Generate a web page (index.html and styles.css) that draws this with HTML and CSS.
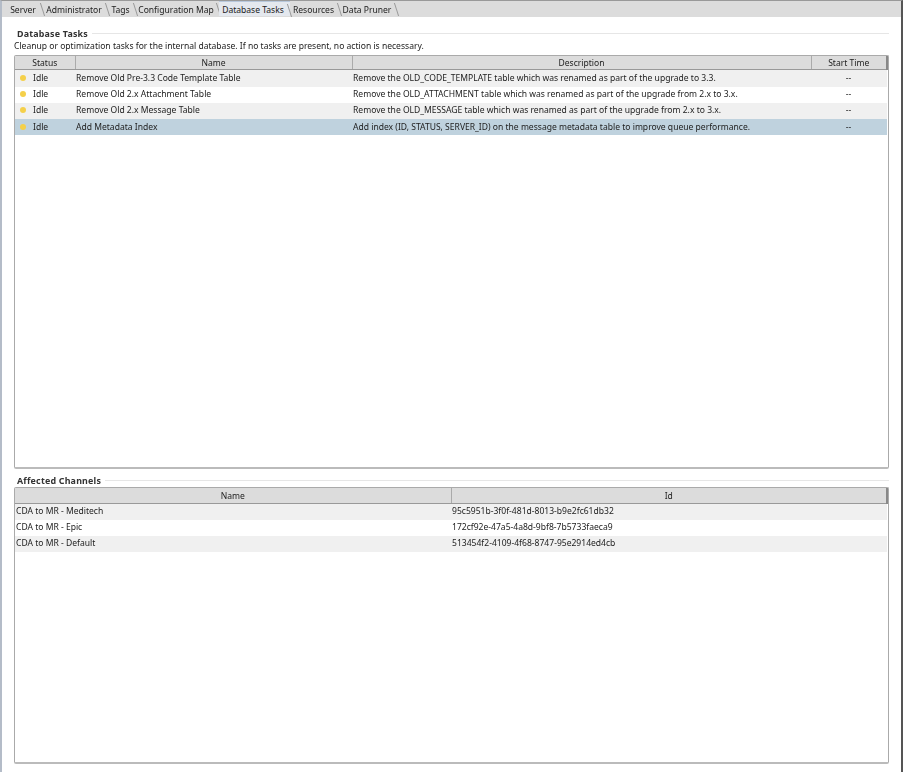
FILE: index.html
```html
<!DOCTYPE html>
<html lang="en">
<head>
    <meta charset="UTF-8">
    <title>Database Tasks</title>
    <link rel="stylesheet" href="styles.css">
</head>
<body>
    <div class="window">
        <div class="tabbar">
            <div class="tab tab-server">Server</div>
            <div class="tab tab-admin">Administrator</div>
            <div class="tab tab-tags">Tags</div>
            <div class="tab tab-config">Configuration Map</div>
            <div class="tab tab-active">Database Tasks</div>
            <div class="tab tab-resources">Resources</div>
            <div class="tab tab-pruner">Data Pruner</div>
        </div>
        <div class="content">
            <div class="section-title"><span>Database Tasks</span></div>
            <p class="hint">Cleanup or optimization tasks for the internal database. If no tasks are present, no action is necessary.</p>
            <div class="table-box tasks-box">
                <table class="tasks">
                    <colgroup>
                        <col class="col-status">
                        <col class="col-name">
                        <col class="col-desc">
                        <col>
                    </colgroup>
                    <thead>
                        <tr><th>Status</th><th>Name</th><th>Description</th><th>Start Time</th></tr>
                    </thead>
                    <tbody>
                        <tr class="odd">
                            <td><span class="dot"></span>Idle</td>
                            <td>Remove Old Pre-3.3 Code Template Table</td>
                            <td>Remove the OLD_CODE_TEMPLATE table which was renamed as part of the upgrade to 3.3.</td>
                            <td class="center">--</td>
                        </tr>
                        <tr>
                            <td><span class="dot"></span>Idle</td>
                            <td>Remove Old 2.x Attachment Table</td>
                            <td>Remove the OLD_ATTACHMENT table which was renamed as part of the upgrade from 2.x to 3.x.</td>
                            <td class="center">--</td>
                        </tr>
                        <tr class="odd">
                            <td><span class="dot"></span>Idle</td>
                            <td>Remove Old 2.x Message Table</td>
                            <td>Remove the OLD_MESSAGE table which was renamed as part of the upgrade from 2.x to 3.x.</td>
                            <td class="center">--</td>
                        </tr>
                        <tr class="selected">
                            <td><span class="dot"></span>Idle</td>
                            <td>Add Metadata Index</td>
                            <td>Add index (ID, STATUS, SERVER_ID) on the message metadata table to improve queue performance.</td>
                            <td class="center">--</td>
                        </tr>
                    </tbody>
                </table>
            </div>
            <div class="section-title channels-title"><span>Affected Channels</span></div>
            <div class="table-box channels-box">
                <table class="channels">
                    <colgroup>
                        <col class="col-channel">
                        <col>
                    </colgroup>
                    <thead>
                        <tr><th>Name</th><th>Id</th></tr>
                    </thead>
                    <tbody>
                        <tr class="odd"><td>CDA to MR - Meditech</td><td>95c5951b-3f0f-481d-8013-b9e2fc61db32</td></tr>
                        <tr><td>CDA to MR - Epic</td><td>172cf92e-47a5-4a8d-9bf8-7b5733faeca9</td></tr>
                        <tr class="odd"><td>CDA to MR - Default</td><td>513454f2-4109-4f68-8747-95e2914ed4cb</td></tr>
                    </tbody>
                </table>
            </div>
        </div>
    </div>
</body>
</html>
```

FILE: styles.css
```css
html, body {
    margin: 0;
    padding: 0;
    height: 100%;
    background-color: #fff;
}
body {
    font-family: "Noto Sans", sans-serif;
    font-size: 8.55px;
    color: #222;
    overflow: hidden;
}
.window {
    width: 903px;
    height: 772px;
    box-sizing: border-box;
    border-left: 2px solid #b4bcc8;
    border-right: 2px solid #555;
    border-top: 1px solid #999;
    display: flex;
    flex-direction: column;
    filter: blur(0.45px);
}
.tabbar {
    height: 16px;
    flex: none;
    display: flex;
    background-color: #dcdcdc;
    padding-left: 4px;
}
.tab {
    position: relative;
    height: 15px;
    line-height: 19px;
    box-sizing: border-box;
    padding-right: 3px;
    text-align: center;
    white-space: nowrap;
}
/* slanted divider between tabs */
.tab::after {
    content: "";
    position: absolute;
    top: 2px;
    right: 0;
    width: 1px;
    height: 13px;
    background-color: #999;
    transform: skewX(18deg);
}
.tab-server { width: 37px; }
.tab-admin { width: 65px; }
.tab-tags { width: 28px; }
.tab-config { width: 83px; }
.tab-active {
    width: 71px;
    background-color: #e4e8ee;
    border-top: 1px solid #b8c8dc;
    line-height: 16px;
}
.tab-resources { width: 50px; }
.tab-pruner { width: 57px; }
.content {
    flex: 1;
    display: flex;
    flex-direction: column;
    padding: 10px 12px 6px 12px;
    min-height: 0;
}
.section-title {
    display: flex;
    align-items: center;
    gap: 4px;
    height: 12px;
    padding-left: 3px;
    font-size: 8.9px;
    font-weight: bold;
    letter-spacing: 0.2px;
    color: #333;
}
.section-title::after {
    content: "";
    flex: 1;
    height: 1px;
    background-color: #e6e6e6;
}
.hint {
    margin: 1px 0 3px 0;
    height: 12px;
    line-height: 12px;
}
.table-box {
    border: 1px solid #aaa;
    border-bottom: 2px solid #bbb;
    border-radius: 2px;
    background-color: #fff;
    box-sizing: border-box;
}
.tasks-box { height: 414px; }
.channels-title { margin-top: 5px; margin-bottom: 1px; }
.channels-box { height: 277px; }
table {
    width: 100%;
    table-layout: fixed;
    border-collapse: collapse;
}
.col-status { width: 60px; }
.col-name { width: 277px; }
.col-desc { width: 459px; }
.col-channel { width: 436px; }
th {
    height: 13px;
    padding: 0;
    font-weight: normal;
    text-align: center;
    background-color: #dcdcdc;
    border-right: 1px solid #aaa;
    border-bottom: 1px solid #999;
}
th:last-child { border-right: 2px solid #888; }
.channels th { height: 15px; }
td {
    height: 16px;
    box-sizing: border-box;
    padding: 0 2px 1px 1px;
    white-space: nowrap;
    overflow: hidden;
}
.tasks tbody tr:first-child td { height: 17px; }
tr.odd td { background-color: #f0f0f0; }
tr.selected td {
    background-color: #bfd2de;
    padding-bottom: 0;
}
.center { text-align: center; }
.dot {
    display: inline-block;
    width: 6px;
    height: 6px;
    margin: 0 7px 0 4px;
    border-radius: 50%;
    background-color: #f5d04a;
    vertical-align: 0;
}
```
